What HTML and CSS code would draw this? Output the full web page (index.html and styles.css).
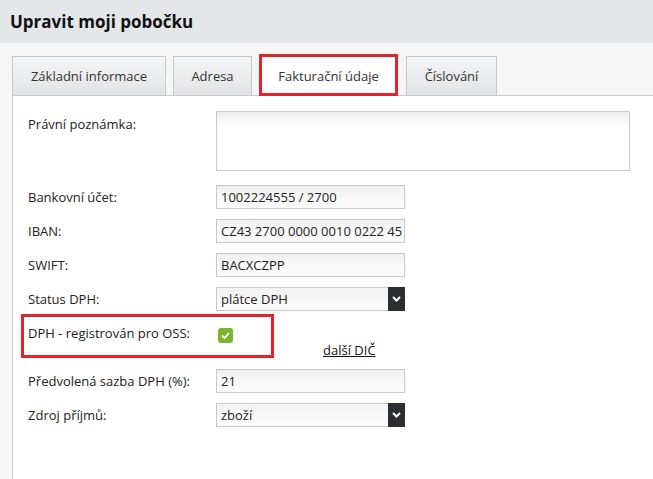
FILE: index.html
```html
<!DOCTYPE html>
<html lang="cs">
<head>
<meta charset="utf-8">
<title>Upravit moji pobočku</title>
<link rel="stylesheet" href="styles.css">
</head>
<body>
<header class="header">
  <h1 class="title">Upravit moji pobočku</h1>
</header>
<nav class="tabs">
  <div class="tab">Základní informace</div>
  <div class="tab">Adresa</div>
  <div class="tab tab-active">Fakturační údaje</div>
  <div class="tab">Číslování</div>
</nav>
<main class="panel">
  <div class="row">
    <label class="label">Právní poznámka:</label>
    <div class="textarea"></div>
  </div>
  <div class="row">
    <label class="label">Bankovní účet:</label>
    <div class="input">1002224555 / 2700</div>
  </div>
  <div class="row">
    <label class="label">IBAN:</label>
    <div class="input">CZ43 2700 0000 0010 0222 45</div>
  </div>
  <div class="row">
    <label class="label">SWIFT:</label>
    <div class="input">BACXCZPP</div>
  </div>
  <div class="row">
    <label class="label">Status DPH:</label>
    <div class="select">
      <span class="select-text">plátce DPH</span>
      <span class="select-btn"><svg width="9" height="6" viewBox="0 0 9 6"><path d="M1 1 L4.5 4.5 L8 1" fill="none" stroke="#fff" stroke-width="2"/></svg></span>
    </div>
  </div>
  <div class="row row-oss">
    <label class="label">DPH - registrován pro OSS:</label>
    <div class="oss-field">
      <span class="check"><svg width="9" height="7" viewBox="0 0 9 7"><path d="M1 3.5 L3.5 6 L8 1.2" fill="none" stroke="#fff" stroke-width="1.8"/></svg></span>
      <a class="link" href="#">další DIČ</a>
    </div>
    <div class="highlight"></div>
  </div>
  <div class="row">
    <label class="label">Předvolená sazba DPH (%):</label>
    <div class="input">21</div>
  </div>
  <div class="row">
    <label class="label">Zdroj příjmů:</label>
    <div class="select">
      <span class="select-text">zboží</span>
      <span class="select-btn"><svg width="9" height="6" viewBox="0 0 9 6"><path d="M1 1 L4.5 4.5 L8 1" fill="none" stroke="#fff" stroke-width="2"/></svg></span>
    </div>
  </div>
</main>
</body>
</html>
```
FILE: styles.css
```css
* { box-sizing: border-box; }
html, body { height: 100%; }
body {
  margin: 0;
  background: #f6f6f6;
  font-family: "Open Sans", "DejaVu Sans", sans-serif;
  font-size: 13px;
  color: #222;
  display: flex;
  flex-direction: column;
}
.header {
  height: 43px;
  background: #e4e7ea;
  padding-left: 10px;
  display: flex;
  align-items: center;
}
.title {
  margin: 0;
  font-size: 17px;
  font-weight: 700;
  color: #111;
  line-height: 24px;
  padding-top: 1px;
}
.tabs {
  display: flex;
  align-items: flex-end;
  gap: 7px;
  padding-left: 12px;
  padding-top: 11px;
  height: 52px;
}
.tab {
  height: 39px;
  padding: 0 16px;
  display: flex;
  align-items: center;
  justify-content: center;
  background: linear-gradient(#f4f5f6, #e2e4e6);
  border: 1px solid #c8c8c8;
  border-bottom: none;
  color: #333;
  white-space: nowrap;
}
.tab:nth-child(1) { width: 154px; }
.tab:nth-child(2) { width: 79px; }
.tab:nth-child(4) { width: 91px; margin-left: 1px; }
.tab-active {
  width: 139px;
  height: 42px;
  background: #fff;
  border: 3px solid #e2252b;
  margin-bottom: -1px;
  padding-top: 2px;
  position: relative;
  z-index: 1;
}
.panel {
  flex: 1;
  margin-left: 12px;
  background: #fff;
  border-left: 1px solid #cacaca;
  border-top: 1px solid #cacaca;
  padding: 15px 0 0 15px;
}
.row {
  display: flex;
  align-items: flex-start;
  margin-bottom: 10px;
}
.row:first-child { margin-bottom: 14px; }
.label {
  width: 188px;
  flex: none;
  line-height: 24px;
  color: #222;
}
.row:first-child .label { line-height: 26px; }
.textarea {
  width: 414px;
  height: 60px;
  border: 1px solid #c9c9c9;
  background: linear-gradient(#eeeeee, #ffffff 14px);
}
.input {
  width: 189px;
  height: 24px;
  line-height: 22px;
  padding: 0 2px 0 4px;
  border: 1px solid #c9c9c9;
  background: linear-gradient(#f0f0f0, #fafafa 60%);
  white-space: nowrap;
  overflow: hidden;
  color: #222;
}
.select {
  width: 189px;
  height: 24px;
  display: flex;
  border: 1px solid #c9c9c9;
  border-right: none;
  background: linear-gradient(#f2f2f2, #fcfcfc);
}
.select-text {
  flex: 1;
  line-height: 22px;
  padding-left: 4px;
}
.select-btn {
  width: 17px;
  margin: -1px 0;
  background: #2b2f33;
  display: flex;
  align-items: center;
  justify-content: center;
}
.row-oss {
  position: relative;
  height: 38px;
  margin-bottom: 10px;
}
.oss-field {
  display: flex;
  align-items: flex-start;
}
.check {
  width: 15px;
  height: 15px;
  margin: 7px 0 0 2px;
  border-radius: 3px;
  background: #7ab52e;
  display: flex;
  align-items: center;
  justify-content: center;
}
.link {
  margin: 20px 0 0 90px;
  line-height: 18px;
  color: #111;
  text-decoration: underline;
}
.highlight {
  position: absolute;
  left: -7px;
  top: -7px;
  width: 253px;
  height: 44px;
  border: 3px solid #e2252b;
  pointer-events: none;
}
```
